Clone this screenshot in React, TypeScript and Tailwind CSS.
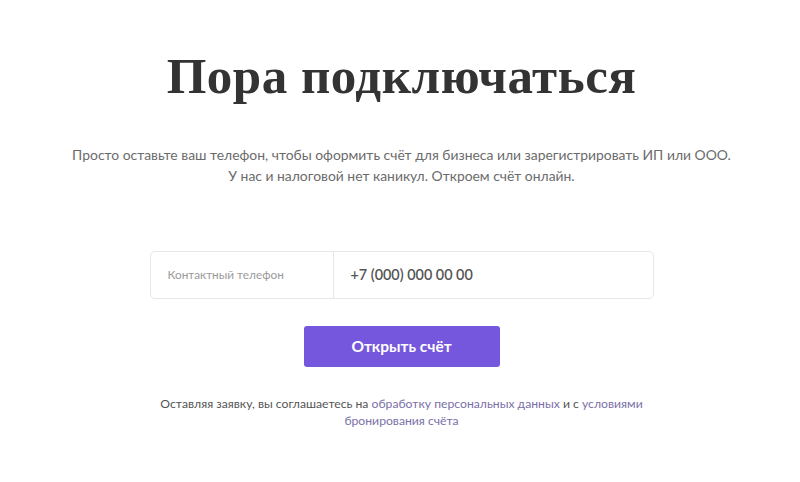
export default function App() {
  return (
    <div className="min-h-[482px] w-full bg-white flex flex-col items-center pt-[46px] pl-[3px] font-['Lato','Noto_Sans',sans-serif]">
      <h1 className="font-['Liberation_Serif',serif] font-bold text-[51px] leading-[60px] text-[#333333] tracking-[0.5px]">
        Пора подключаться
      </h1>

      <p className="mt-[38px] text-center text-[13.9px] leading-[21px] text-[#6b6b6b]">
        Просто оставьте ваш телефон, чтобы оформить счёт для бизнеса или зарегистрировать ИП или ООО.
        <br />
        У нас и налоговой нет каникул. Откроем счёт онлайн.
      </p>

      <div className="mt-[65px] flex w-[504px] h-[48px] rounded-[5px] border border-[#e6e6e6] bg-white">
        <div className="w-[183px] flex items-center pl-[17px] border-r border-[#e6e6e6] text-[11.8px] text-[#9a9a9a]">
          Контактный телефон
        </div>
        <div className="flex-1 flex items-center pl-[17px] text-[14.4px] font-semibold text-[#555555]">
          +7 (000) 000 00 00
        </div>
      </div>

      <button className="mt-[27px] w-[196px] h-[41px] rounded-[3px] bg-[#7557dd] text-white text-[15.5px] font-bold">
        Открыть счёт
      </button>

      <p className="mt-[28px] text-center text-[12.2px] leading-[17px] text-[#555555]">
        Оставляя заявку, вы соглашаетесь на{" "}
        <a className="text-[#7b6fa8]">обработку персональных данных</a> и с{" "}
        <a className="text-[#7b6fa8]">условиями</a>
        <br />
        <a className="text-[#7b6fa8]">бронирования счёта</a>
      </p>
    </div>
  );
}
